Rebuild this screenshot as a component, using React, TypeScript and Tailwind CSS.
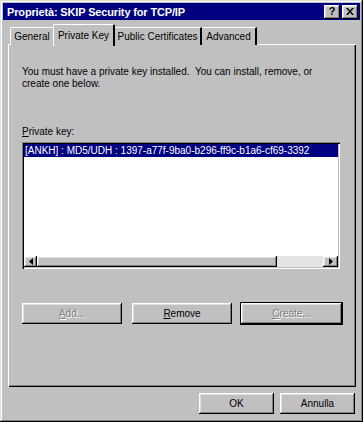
import React from "react";

const raised =
  "shadow-[inset_-1px_-1px_#000,inset_1px_1px_#fff,inset_-2px_-2px_#808080,inset_2px_2px_#dfdfdf]";

function Btn({
  children,
  disabled,
  className = "",
}: {
  children: React.ReactNode;
  disabled?: boolean;
  className?: string;
}) {
  return (
    <div
      className={`flex items-center justify-center bg-[#c0c0c0] ${raised} ${
        disabled ? "text-[#808080] [text-shadow:1px_1px_#fff]" : "text-black"
      } ${className}`}
    >
      {children}
    </div>
  );
}

export default function App() {
  return (
    <div
      className="w-[363px] h-[422px] bg-[#c0c0c0] flex flex-col shadow-[inset_-1px_-1px_#000,inset_1px_1px_#dfdfdf,inset_-2px_-2px_#808080,inset_2px_2px_#fff] text-[10px] leading-[12px] text-black"
      style={{ fontFamily: '"Liberation Sans", Arial, sans-serif' }}
    >
      {/* Title bar */}
      <div className="mx-[3px] mt-[3px] h-[17px] bg-[#000080] flex items-center pl-[4px] pr-[2px]">
        <span className="text-white font-bold text-[11px] tracking-[-0.15px] flex-1 whitespace-nowrap">
          Proprietà: SKIP Security for TCP/IP
        </span>
        <div className={`w-[16px] h-[14px] ${raised} bg-[#c0c0c0] flex items-center justify-center font-bold text-[11px] leading-none`}>
          ?
        </div>
        <div className={`ml-[2px] w-[16px] h-[14px] ${raised} bg-[#c0c0c0] flex items-center justify-center`}>
          <svg width="8" height="7" viewBox="0 0 8 7">
            <path d="M0 0h2l2 2.5L6 0h2L5 3.5 8 7H6L4 4.5 2 7H0l3-3.5z" fill="#000" />
          </svg>
        </div>
      </div>

      {/* Tabs */}
      <div className="flex items-end pl-[10px] mt-[3px] h-[21px] relative z-10 whitespace-nowrap">
        <div className="w-[44px] h-[18px] flex items-center justify-center border-t border-l border-white border-r border-r-[#808080] rounded-tl-[2px] bg-[#c0c0c0] mb-[-1px]">
          General
        </div>
        <div className="w-[62px] h-[22px] ml-[-1px] flex items-start pt-[5px] justify-center border-t border-l border-white border-r-2 border-r-black rounded-t-[2px] bg-[#c0c0c0] mb-[-2px] relative">
          Private Key
        </div>
        <div className="w-[87px] h-[18px] flex items-center justify-center border-t border-white border-r-2 border-r-black bg-[#c0c0c0] mb-[-1px]">
          Public Certificates
        </div>
        <div className="w-[55px] h-[18px] flex items-center justify-center border-t border-white border-r-2 border-r-black bg-[#c0c0c0] mb-[-1px]">
          Advanced
        </div>
      </div>

      {/* Panel */}
      <div className="ml-[8px] mr-[7px] h-[343px] border-l border-t border-white shadow-[inset_-1px_-1px_#000,inset_-2px_-2px_#808080] flex flex-col pl-[13px] pr-[14px]">
        <div className="mt-[21px] leading-[12px]">
          <div>You must have a private key installed.&nbsp; You can install, remove, or</div>
          <div>create one below.</div>
        </div>

        <div className="mt-[36px]">
          <span className="underline">P</span>rivate key:
        </div>

        {/* List box */}
        <div className="mt-[4px] w-[318px] h-[127px] bg-white shadow-[inset_1px_1px_#808080,inset_2px_2px_#000,inset_-1px_-1px_#fff,inset_-2px_-2px_#c0c0c0] p-[2px] flex flex-col">
          <div className="h-[13px] bg-[#000080] text-white pl-[1px] flex items-center whitespace-nowrap">
            [ANKH] : MD5/UDH : 1397-a77f-9ba0-b296-ff9c-b1a6-cf69-3392
          </div>
          <div className="flex-1" />
          {/* scrollbar */}
          <div className="h-[11px] flex">
            <div className={`w-[13px] h-full bg-[#c0c0c0] ${raised} flex items-center justify-center`}>
              <svg width="4" height="7" viewBox="0 0 4 7">
                <path d="M4 0v7L0 3.5z" fill="#000" />
              </svg>
            </div>
            <div className={`w-[240px] h-full bg-[#c0c0c0] ${raised}`} />
            <div className="flex-1 h-full bg-[#e4e4e4]" />
            <div className={`w-[15px] h-full bg-[#c0c0c0] ${raised} flex items-center justify-center`}>
              <svg width="4" height="7" viewBox="0 0 4 7">
                <path d="M0 0v7l4-3.5z" fill="#000" />
              </svg>
            </div>
          </div>
        </div>

        {/* Buttons */}
        <div className="mt-[34px] flex">
          <Btn disabled className="w-[100px] h-[21px]">
            <span><span className="underline">A</span>dd...</span>
          </Btn>
          <Btn className="w-[100px] h-[21px] ml-[10px]">
            <span><span className="underline">R</span>emove</span>
          </Btn>
          <Btn disabled className="w-[101px] h-[21px] ml-[9px] outline outline-1 outline-black">
            <span><span className="underline">C</span>reate...</span>
          </Btn>
        </div>
      </div>

      {/* Bottom buttons */}
      <div className="flex justify-end pr-[8px] mt-[6px]">
        <Btn className="w-[75px] h-[21px]">OK</Btn>
        <Btn className="w-[75px] h-[21px] ml-[6px]">Annulla</Btn>
      </div>
    </div>
  );
}
